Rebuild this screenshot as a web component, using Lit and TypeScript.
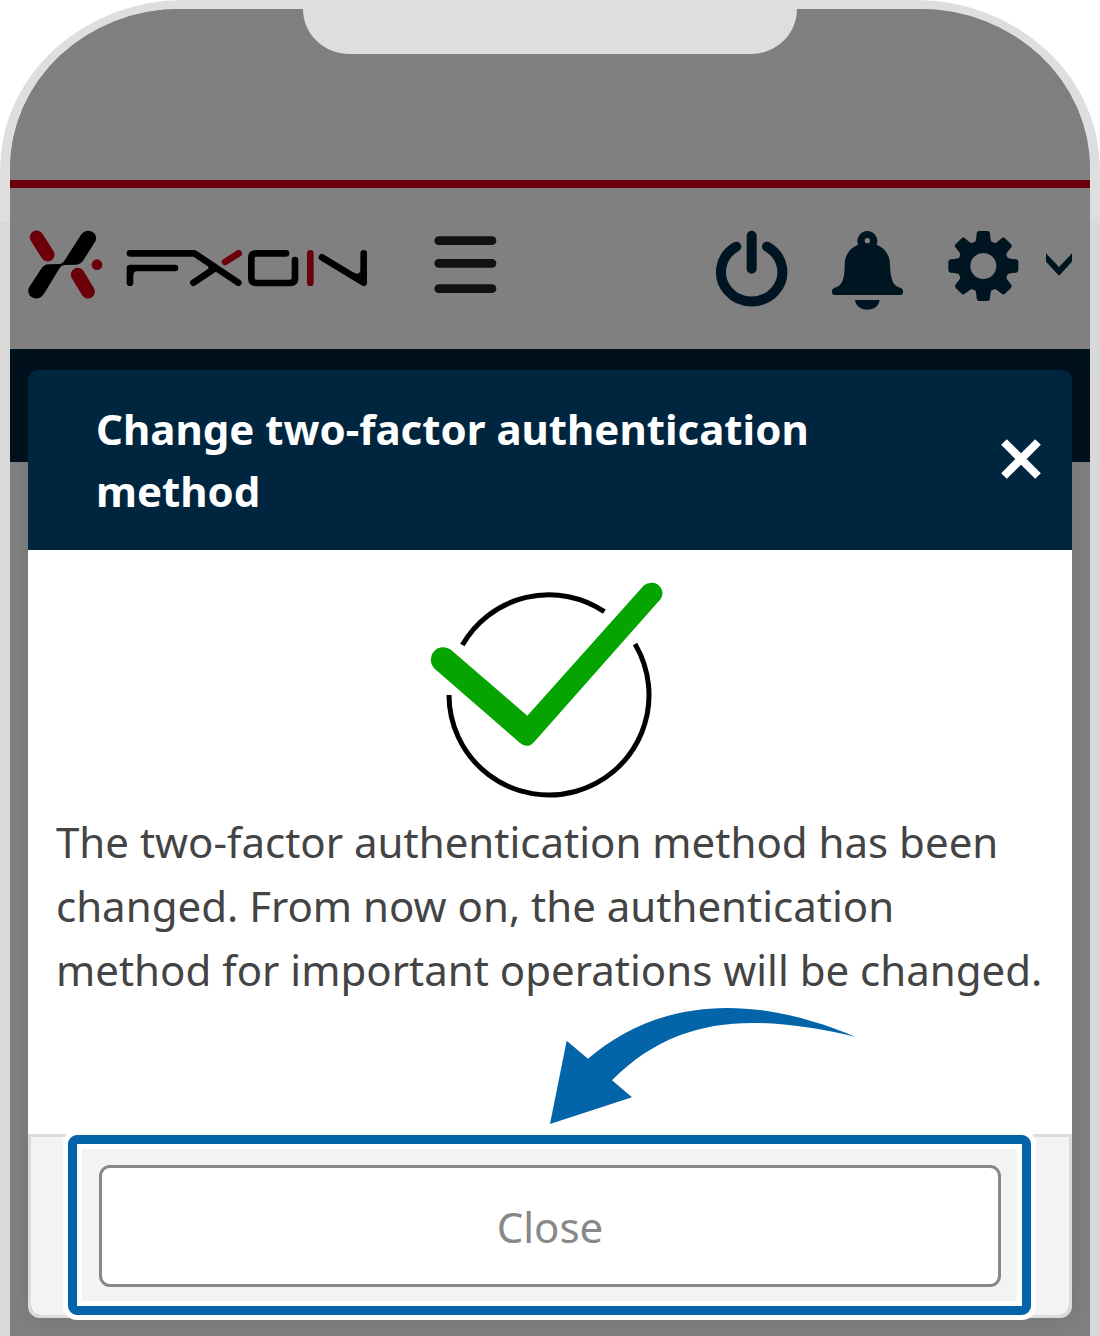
import { LitElement, html, css, svg } from "lit";
import { customElement, state } from "lit/decorators.js";

const gearTeeth = [0, 45, 90, 135, 180, 225, 270, 315];

@customElement("app-root")
export class AppRoot extends LitElement {
  static styles = css`
    :host {
      display: block;
      font-family: "Noto Sans", "Open Sans", sans-serif;
      background: #fff;
    }
    * {
      box-sizing: border-box;
    }
    svg {
      display: block;
    }
    button {
      font: inherit;
      border: 0;
      padding: 0;
      background: none;
      cursor: pointer;
    }
    .phone {
      min-height: 100vh;
      display: flex;
      padding: 9px 10px 0;
      border-radius: 184px 184px 0 0 / 170px 170px 0 0;
      background: linear-gradient(#dedede 222px, #d9d9d9 222px);
    }
    .screen {
      flex: 1;
      display: grid;
      border-radius: 170px 170px 0 0 / 160px 160px 0 0;
      overflow: hidden;
      background: #808080;
    }
    .page,
    .layer {
      grid-area: 1 / 1;
      min-width: 0;
    }
    .status {
      height: 171px;
      display: flex;
      justify-content: center;
      background: #7f7f7f;
    }
    .notch {
      width: 46%;
      max-width: 494px;
      height: 45px;
      border-radius: 0 0 46px 46px / 0 0 45px 45px;
      background: #dedede;
    }
    .topbar {
      height: 169px;
      border-top: 8px solid #6b000a;
      padding: 42px 18px 0;
      display: flex;
      align-items: flex-start;
      gap: 66px;
    }
    .tools {
      margin-left: auto;
      display: flex;
      gap: 44px;
    }
    .settings {
      display: flex;
      gap: 27px;
    }
    .band {
      height: 113px;
      background: #00111e;
    }
    .layer {
      padding: 361px 18px 18px;
    }
    .dialog {
      border-radius: 10px;
      box-shadow: 0 0 24px rgba(0, 0, 0, 0.1);
    }
    .head {
      display: flex;
      align-items: center;
      justify-content: space-between;
      padding: 28px 30px 28px 68px;
      border-radius: 10px 10px 0 0;
      background: #00263f;
      color: #fff;
    }
    .title {
      margin: 0;
      max-width: 760px;
      font-size: 42px;
      line-height: 62px;
      font-weight: 700;
    }
    .body {
      min-height: 584px;
      padding: 30px 28px 0;
      background: #fff;
    }
    .done {
      margin: 0 auto;
    }
    .message {
      margin: 10px 0 0;
      font-size: 42px;
      line-height: 64px;
      color: #444;
    }
    .foot {
      padding: 28px 68px;
      border: 3px solid #dcdcdc;
      border-radius: 0 0 12px 12px;
      background: linear-gradient(#f3f3f3, #f3f3f3) padding-box;
    }
    .target {
      position: relative;
    }
    .close {
      display: block;
      width: 100%;
      height: 122px;
      border: 3px solid #888;
      border-radius: 11px;
      background: #fff;
      color: #888;
      font-size: 42px;
    }
    .ring {
      position: absolute;
      inset: -30px -30px -28px -31px;
      border: 9px solid #0464a9;
      border-radius: 9px;
      box-shadow: 0 0 0 5px #fff, inset 0 0 0 5px #fff;
      pointer-events: none;
    }
    .arrow {
      position: absolute;
      left: 50%;
      bottom: calc(100% + 41px);
      overflow: visible;
      pointer-events: none;
    }
  `;

  @state() private open = true;

  private dismiss() {
    this.open = false;
  }

  private logo() {
    return html`<svg width="340" height="70" viewBox="54 60 1020 210" role="img" aria-label="FXON" fill="none" stroke-linecap="round" stroke-linejoin="round">
      <path d="M80 82L113 134M203 194L234 245" stroke="#6b000a" stroke-width="41" />
      <circle cx="261" cy="164" r="16" fill="#6b000a" />
      <path d="M213 74Q224 60 240 63Q263 70 257 92L222 148Q214 163 200 164L163 165Q154 166 149 174L101 253Q90 268 73 265Q50 258 56 234L91 180Q101 163 117 163L150 162Q158 161 164 151Z" fill="#000" />
      <path d="M360 130H553L685 218M550 218L613 176M360 218V174H495M828 130H738Q724 130 724 144V204Q724 219 738 219H840Q855 219 855 204V150M936 142L1061 218V130" stroke="#000" stroke-width="20" />
      <path d="M568 150L592 166Q600 174 590 181L600 186L640 180ZM369 180H384Q370 184 369 198ZM1024 184Q1050 202 1052 176V214Z" fill="#000" />
      <path d="M645 156L686 130M901 130V218" stroke="#6b000a" stroke-width="20" />
    </svg>`;
  }

  private gear() {
    return svg`
      ${gearTeeth.map(
        (a) => svg`<path transform="rotate(${a} 549 168)" d="M520 108Q528 94 529 70Q530 63 537 63H561Q568 63 569 70Q570 94 578 108Z" fill="#001522" />`
      )}
      <circle cx="549" cy="168" r="58" fill="none" stroke="#001522" stroke-width="38" />`;
  }

  render() {
    return html`
      <div class="phone">
        <div class="screen">
          <div class="page">
            <div class="status"><div class="notch"></div></div>
            <header class="topbar">
              ${this.logo()}
              <button class="menu" aria-label="Menu">
                <svg width="63" height="80" viewBox="102 60 189 240">
                  <path d="M116 92H276M116 160H276M116 236H276" stroke="#121011" stroke-width="26" stroke-linecap="round" />
                </svg>
              </button>
              <div class="tools">
                <button aria-label="Log out">
                  <svg width="73" height="80" viewBox="945 60 219 240" fill="none" stroke="#001522" stroke-width="30" stroke-linecap="round">
                    <path d="M1055 77V176M1009 110A92 88 0 1 0 1101 110" />
                  </svg>
                </button>
                <button aria-label="Notifications">
                  <svg width="72" height="80" viewBox="96 60 216 240" fill="#001522">
                    <path fill-rule="evenodd" d="M174 104A30 30 0 1 1 230 104C256 114 270 138 270 164C271 196 275 224 296 232Q309 235 309 243V247Q309 255 301 255H104Q96 255 96 247V243Q96 235 109 232C130 224 134 196 134 164C134 138 148 114 174 104ZM202 84A8 8 0 1 0 202 100A8 8 0 1 0 202 84Z" />
                    <path d="M165 270H239C237 288 222 299 202 299S167 288 165 270Z" />
                  </svg>
                </button>
                <button class="settings" aria-label="Settings">
                  <svg width="71" height="80" viewBox="443 60 213 240">${this.gear()}</svg>
                  <svg width="26" height="80" viewBox="738 60 78 240">
                    <path d="M738 130L777 171L816 130V155L777 197L738 155Z" fill="#001522" />
                  </svg>
                </button>
              </div>
            </header>
            <div class="band"></div>
          </div>
          ${this.open
            ? html`<div class="layer">
                <section class="dialog" role="dialog" aria-modal="true" aria-labelledby="title">
                  <div class="head">
                    <h1 class="title" id="title">Change two-factor authentication method</h1>
                    <button aria-label="Close dialog" @click=${this.dismiss}>
                      <svg width="42" height="42" viewBox="0 1 42 42" stroke="#fff" stroke-width="8">
                        <path d="M4 4L38 38M38 4L4 38" />
                      </svg>
                    </button>
                  </div>
                  <div class="body">
                    <svg class="done" width="242" height="220" viewBox="88 30 726 660" fill="none">
                      <g stroke="#000" stroke-width="15">
                        <path d="M188 225A299 299 0 0 1 614 125" />
                        <path d="M706 222A300 300 0 1 1 148 375" />
                      </g>
                      <path d="M127 232Q144 231 158 243L383 437L733 46Q743 37 758 38C782 40 797 65 783 87L404 515Q384 538 361 519L105 296Q91 282 94 264Q99 235 127 232Z" fill="#05a400" />
                    </svg>
                    <p class="message">
                      The two-factor authentication method has been changed. From now on, the authentication method for important operations will be changed.
                    </p>
                  </div>
                  <div class="foot">
                    <div class="target">
                      <button class="close" @click=${this.dismiss}>Close</button>
                      <div class="ring"></div>
                      <svg class="arrow" width="306" height="116" viewBox="60 54 918 348">
                        <path d="M60 402L110 152L174 206C340 64 600 -18 975 140C670 70 440 75 246 271L306 322Z" fill="#0464a9" />
                      </svg>
                    </div>
                  </div>
                </section>
              </div>`
            : null}
        </div>
      </div>
    `;
  }
}
